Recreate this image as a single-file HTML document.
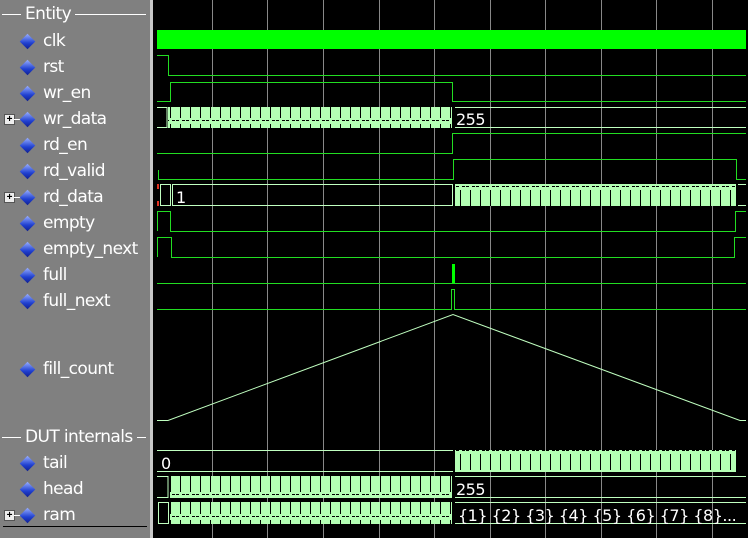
<!DOCTYPE html>
<html><head><meta charset="utf-8"><style>
html,body{margin:0;padding:0;width:748px;height:538px;overflow:hidden;background:#000}
#left{position:absolute;left:0;top:0;width:150px;height:538px;background:#808080}
#sep{position:absolute;left:150px;top:0;width:3px;height:538px;background:#c8c8c8}
.l{position:absolute;left:43px;color:#fff;font:17px "DejaVu Sans","Liberation Sans",sans-serif;line-height:20px;letter-spacing:-0.6px}
.d{position:absolute;left:22px;width:11px;height:11px;background:linear-gradient(135deg,#9ab0ff,#2040d0 60%,#102090);transform:rotate(45deg)}
.p{position:absolute;left:4px;width:9px;height:9px;background:#eee;border:1px solid #555;font:bold 10px/9px "Liberation Sans",sans-serif;text-align:center;color:#000}
.pl{position:absolute;left:14px;width:8px;height:1px;background:#fff}
.h{position:absolute;color:#fff;font:17px "DejaVu Sans","Liberation Sans",sans-serif;letter-spacing:-0.6px;background:#808080;padding:0 4px}
.hl{position:absolute;height:1px;background:#fff}
svg{position:absolute;left:0;top:0}
</style></head><body>
<div id="left">
<div class="hl" style="left:2px;top:14px;width:144px"></div>
<div class="h" style="left:21px;top:4px">Entity</div>
<div class="hl" style="left:2px;top:437px;width:144px"></div>
<div class="h" style="left:21px;top:427px">DUT internals</div>

<div class="d" style="top:36px"></div><div class="l" style="top:31px">clk</div>
<div class="d" style="top:62px"></div><div class="l" style="top:57px">rst</div>
<div class="d" style="top:88px"></div><div class="l" style="top:83px">wr_en</div>
<div class="p" style="top:114px">+</div><div class="pl" style="top:119px"></div>
<div class="d" style="top:114px"></div><div class="l" style="top:109px">wr_data</div>
<div class="d" style="top:140px"></div><div class="l" style="top:135px">rd_en</div>
<div class="d" style="top:166px"></div><div class="l" style="top:161px">rd_valid</div>
<div class="p" style="top:192px">+</div><div class="pl" style="top:197px"></div>
<div class="d" style="top:192px"></div><div class="l" style="top:187px">rd_data</div>
<div class="d" style="top:218px"></div><div class="l" style="top:213px">empty</div>
<div class="d" style="top:244px"></div><div class="l" style="top:239px">empty_next</div>
<div class="d" style="top:270px"></div><div class="l" style="top:265px">full</div>
<div class="d" style="top:296px"></div><div class="l" style="top:291px">full_next</div>
<div class="d" style="top:364px"></div><div class="l" style="top:359px">fill_count</div>
<div class="d" style="top:458px"></div><div class="l" style="top:453px">tail</div>
<div class="d" style="top:484px"></div><div class="l" style="top:479px">head</div>
<div class="p" style="top:510px">+</div><div class="pl" style="top:515px"></div>
<div class="d" style="top:510px"></div><div class="l" style="top:505px">ram</div>
<div style="position:absolute;left:3px;top:526px;width:144px;height:1px;background:#000"></div>
</div>
<div id="sep"></div>
<svg width="748" height="538" viewBox="0 0 748 538" style="left:0">
<defs>
<pattern id="bp" x="0" y="0" width="10" height="22" patternUnits="userSpaceOnUse">
<rect width="10" height="22" fill="#b4ffb4"/>
<rect x="0" y="0" width="1" height="8" fill="#000"/>
<rect x="0" y="14" width="1" height="8" fill="#000"/>
<rect x="2" y="10" width="3" height="1" fill="#000"/>
<rect x="6" y="10" width="3" height="1" fill="#000"/>
</pattern>
</defs>
<g stroke="#888" stroke-width="1">
<line x1="212.5" y1="0" x2="212.5" y2="538"/><line x1="267.5" y1="0" x2="267.5" y2="538"/>
<line x1="323.5" y1="0" x2="323.5" y2="538"/><line x1="379.5" y1="0" x2="379.5" y2="538"/>
<line x1="434.5" y1="0" x2="434.5" y2="538"/><line x1="490.5" y1="0" x2="490.5" y2="538"/>
<line x1="545.5" y1="0" x2="545.5" y2="538"/><line x1="601.5" y1="0" x2="601.5" y2="538"/>
<line x1="656.5" y1="0" x2="656.5" y2="538"/><line x1="712.5" y1="0" x2="712.5" y2="538"/>
</g>
<rect x="157" y="30" width="589" height="19" fill="#00ff00"/>
<g fill="none" stroke="#22dd22" stroke-width="1">
<polyline points="157,55.5 168.5,55.5 168.5,75.5 746,75.5"/>
<polyline points="157,101.5 170.5,101.5 170.5,82.5 452.5,82.5 452.5,101.5 746,101.5"/>
<polyline points="157,153.5 452.5,153.5 452.5,133.5 746,133.5"/>
<polyline points="158.5,170 158.5,179.5 453.5,179.5 453.5,159.5 736.5,159.5 736.5,179.5 746,179.5"/>
<polyline points="157.5,231 157.5,211.5 170.5,211.5 170.5,231.5 735.5,231.5 735.5,211.5 746,211.5"/>
<polyline points="157.5,257 157.5,237.5 171.5,237.5 171.5,257.5 734.5,257.5 734.5,237.5 746,237.5"/>
<polyline points="157,283.5 746,283.5"/>
<polyline points="157,309.5 451.5,309.5 451.5,289.5 454.5,289.5 454.5,309.5 746,309.5"/>
</g>
<rect x="452" y="264" width="3" height="19" fill="#00ff00"/>
<polyline points="157,420.5 168,420.5 453,314.5 740,420.5 746,420.5" fill="none" stroke="#c0ffc0" stroke-width="1"/>
<g fill="none" stroke="#c0ffc0" stroke-width="1">
<polyline points="157,107.5 167,107.5 167,127.5 157,127.5"/>
<line x1="455" y1="107.5" x2="746" y2="107.5"/><line x1="455" y1="127.5" x2="746" y2="127.5"/>
<rect x="160.5" y="184.5" width="10" height="21"/>
<line x1="172" y1="184.5" x2="453" y2="184.5"/><line x1="172" y1="205.5" x2="453" y2="205.5"/>
<line x1="172.5" y1="185" x2="172.5" y2="205"/><line x1="452.5" y1="185" x2="452.5" y2="205"/>
<line x1="738" y1="184.5" x2="746" y2="184.5"/><line x1="738" y1="205.5" x2="746" y2="205.5"/>
<line x1="157" y1="450.5" x2="453" y2="450.5"/><line x1="157" y1="471.5" x2="453" y2="471.5"/>
<polyline points="157,476.5 168,476.5 168,497.5 157,497.5"/>
<line x1="455" y1="476.5" x2="746" y2="476.5"/><line x1="455" y1="497.5" x2="746" y2="497.5"/>
<rect x="158.5" y="502.5" width="10" height="21"/>
<line x1="455" y1="502.5" x2="746" y2="502.5"/><line x1="455" y1="523.5" x2="746" y2="523.5"/>
</g>
<rect x="157" y="184" width="2" height="5" fill="#e03020"/><rect x="157" y="201" width="2" height="5" fill="#e03020"/>
<rect x="168" y="107" width="284" height="21" fill="url(#bp)"/>
<rect x="455" y="184" width="281" height="22" fill="url(#bp)"/>
<rect x="455" y="450" width="281" height="22" fill="url(#bp)"/>
<rect x="170" y="476" width="282" height="22" fill="url(#bp)"/>
<rect x="170" y="502" width="282" height="22" fill="url(#bp)"/>
<g fill="#fff" font-family="DejaVu Sans,Liberation Sans,sans-serif" font-size="16" letter-spacing="-0.5">
<text x="456" y="125">255</text>
<text x="176" y="203">1</text>
<text x="161" y="469">0</text>
<text x="456" y="495">255</text>
<text x="458" y="521">{1} {2} {3} {4} {5} {6} {7} {8}...</text>
</g>
</svg>
</body></html>
